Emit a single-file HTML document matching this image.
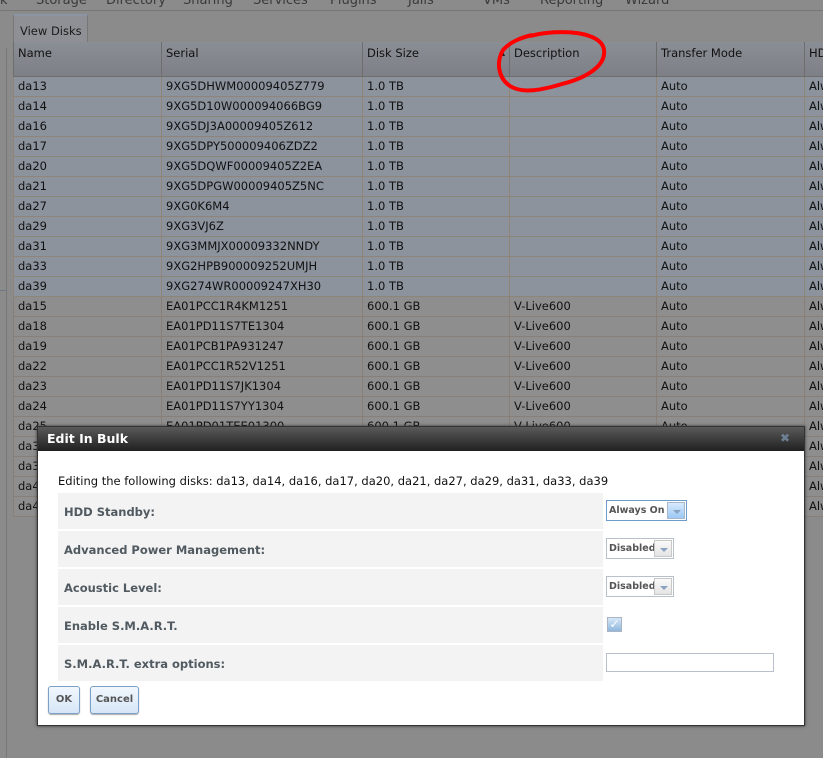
<!DOCTYPE html>
<html><head><style>
*{margin:0;padding:0;box-sizing:border-box}
body{width:823px;height:758px;overflow:hidden;background:#8b8b8b;font-family:"DejaVu Sans","Liberation Sans",sans-serif;font-size:11px;position:relative}
.abs{position:absolute}
.nav{top:-7px;left:0;font-size:13px;color:#3a3a3a;white-space:nowrap}
.tab{left:13px;top:14px;width:75px;height:28px;border:1px solid #777;border-bottom:none;background:#8e9096;color:#1a1a1a;font-size:11.5px;padding:8px 0 0 6px;border-top:2px solid #8b95a3}
table{position:absolute;left:13px;top:42px;border-collapse:collapse;table-layout:fixed;width:840px;font-size:11.5px;color:#111}
td,th{border:1px solid #7e7a76;border-top:none;text-align:left;font-weight:normal;padding:0 4px;height:20px;white-space:nowrap;overflow:hidden}
th{height:34px;vertical-align:top;padding-top:4px;background:linear-gradient(#8a8e95,#7d8086);border-color:#6e6e6e;color:#111}
tr.s td{background:#8c939d;border-color:#8f8478}
tr.u td{background:#8e8e8e;border-color:#8a7f76}
.dlg{left:37px;top:426px;width:768px;height:300px;background:#fff;border:1px solid #333;box-shadow:0 0 3px #333}
.title{height:24px;background:linear-gradient(#5a5a5a,#202020);color:#fff;font-weight:bold;font-size:12.5px;padding:4px 9px}
.row{position:absolute;left:20px;width:545px;height:36px;background:#f3f3f3;font-weight:bold;color:#505a60;font-size:11.5px;padding:12px 6px}
.sel{position:absolute;height:21px;border:1px solid #b8c0cc;background:#fff;font-weight:bold;font-size:9.5px;color:#555;padding:4px 2px;white-space:nowrap;overflow:hidden}
.sel i{position:absolute;right:1px;top:1px;width:18px;height:17px;border:1px solid #c8c8c8;background:linear-gradient(#fafafa,#e4e4e4)}
.sel i:after{content:"";position:absolute;left:5px;top:7px;border:4px solid transparent;border-top:4px solid #8aa2c0}
.btn{position:absolute;top:259px;height:28px;border:1px solid #7ba0c8;border-radius:3px;background:linear-gradient(#f2f7fd,#d6e6f7);font-weight:bold;color:#555;font-size:10px;text-align:center;line-height:26px;box-shadow:0 1px 1px #aaa}
</style></head><body>
<div class="abs nav"><span style="position:absolute;left:0">k</span><span style="position:absolute;left:36px">Storage</span><span style="position:absolute;left:106px">Directory</span><span style="position:absolute;left:183px">Sharing</span><span style="position:absolute;left:253px">Services</span><span style="position:absolute;left:330px">Plugins</span><span style="position:absolute;left:408px">Jails</span><span style="position:absolute;left:483px">VMs</span><span style="position:absolute;left:540px">Reporting</span><span style="position:absolute;left:625px">Wizard</span></div>
<div class="abs" style="left:0;top:10px;width:823px;height:1px;background:#777"></div>
<div class="abs" style="left:0;top:48px;width:7px;height:710px;border-right:1px solid #777"></div>
<div class="abs" style="left:0;top:290px;width:7px;height:1px;background:#6d7786"></div>
<div class="abs tab">View Disks</div>
<table>
<colgroup><col style="width:148px"><col style="width:201px"><col style="width:147px"><col style="width:147px"><col style="width:148px"><col style="width:49px"></colgroup>
<tr><th>Name</th><th>Serial</th><th>Disk Size<span style="float:right;font-size:7px;margin-top:3px">▲</span></th><th>Description</th><th>Transfer Mode</th><th>HDD Standby</th></tr>
<tr class="s"><td>da13</td><td>9XG5DHWM00009405Z779</td><td>1.0 TB</td><td></td><td>Auto</td><td>Always On</td></tr>
<tr class="s"><td>da14</td><td>9XG5D10W000094066BG9</td><td>1.0 TB</td><td></td><td>Auto</td><td>Always On</td></tr>
<tr class="s"><td>da16</td><td>9XG5DJ3A00009405Z612</td><td>1.0 TB</td><td></td><td>Auto</td><td>Always On</td></tr>
<tr class="s"><td>da17</td><td>9XG5DPY500009406ZDZ2</td><td>1.0 TB</td><td></td><td>Auto</td><td>Always On</td></tr>
<tr class="s"><td>da20</td><td>9XG5DQWF00009405Z2EA</td><td>1.0 TB</td><td></td><td>Auto</td><td>Always On</td></tr>
<tr class="s"><td>da21</td><td>9XG5DPGW00009405Z5NC</td><td>1.0 TB</td><td></td><td>Auto</td><td>Always On</td></tr>
<tr class="s"><td>da27</td><td>9XG0K6M4</td><td>1.0 TB</td><td></td><td>Auto</td><td>Always On</td></tr>
<tr class="s"><td>da29</td><td>9XG3VJ6Z</td><td>1.0 TB</td><td></td><td>Auto</td><td>Always On</td></tr>
<tr class="s"><td>da31</td><td>9XG3MMJX00009332NNDY</td><td>1.0 TB</td><td></td><td>Auto</td><td>Always On</td></tr>
<tr class="s"><td>da33</td><td>9XG2HPB900009252UMJH</td><td>1.0 TB</td><td></td><td>Auto</td><td>Always On</td></tr>
<tr class="s"><td>da39</td><td>9XG274WR00009247XH30</td><td>1.0 TB</td><td></td><td>Auto</td><td>Always On</td></tr>
<tr class="u"><td>da15</td><td>EA01PCC1R4KM1251</td><td>600.1 GB</td><td>V-Live600</td><td>Auto</td><td>Always On</td></tr>
<tr class="u"><td>da18</td><td>EA01PD11S7TE1304</td><td>600.1 GB</td><td>V-Live600</td><td>Auto</td><td>Always On</td></tr>
<tr class="u"><td>da19</td><td>EA01PCB1PA931247</td><td>600.1 GB</td><td>V-Live600</td><td>Auto</td><td>Always On</td></tr>
<tr class="u"><td>da22</td><td>EA01PCC1R52V1251</td><td>600.1 GB</td><td>V-Live600</td><td>Auto</td><td>Always On</td></tr>
<tr class="u"><td>da23</td><td>EA01PD11S7JK1304</td><td>600.1 GB</td><td>V-Live600</td><td>Auto</td><td>Always On</td></tr>
<tr class="u"><td>da24</td><td>EA01PD11S7YY1304</td><td>600.1 GB</td><td>V-Live600</td><td>Auto</td><td>Always On</td></tr>
<tr class="u"><td>da25</td><td>EA01PD01TEE01300</td><td>600.1 GB</td><td>V-Live600</td><td>Auto</td><td>Always On</td></tr>
<tr class="u"><td>da30</td><td></td><td></td><td></td><td></td><td>Always On</td></tr>
<tr class="u"><td>da34</td><td></td><td></td><td></td><td></td><td>Always On</td></tr>
<tr class="u"><td>da40</td><td></td><td></td><td></td><td></td><td>Always On</td></tr>
<tr class="u"><td>da41</td><td></td><td></td><td></td><td></td><td>Always On</td></tr>
</table>
<svg class="abs" style="left:0;top:0" width="823" height="758"><path d="M530 36 C562 28 602 32 604 50 C606 66 586 78 562 84 C542 90 522 94 510 86 C498 78 496 62 503 50 C510 42 520 38 532 35" fill="none" stroke="#f00" stroke-width="4"/></svg>
<div class="abs dlg">
<div class="title">Edit In Bulk<span style="position:absolute;right:14px;top:4px;color:#6d7f93;font-size:12px">✖</span></div>
<div style="position:absolute;left:20px;top:47px;font-size:11.5px;color:#111">Editing the following disks: da13, da14, da16, da17, da20, da21, da27, da29, da31, da33, da39</div>
<div class="row" style="top:66px">HDD Standby:</div>
<div class="row" style="top:104px">Advanced Power Management:</div>
<div class="row" style="top:142px">Acoustic Level:</div>
<div class="row" style="top:180px">Enable S.M.A.R.T.</div>
<div class="row" style="top:218px">S.M.A.R.T. extra options:</div>
<div class="sel" style="left:568px;top:73px;width:81px;border-color:#6d9ccc">Always On<i style="background:linear-gradient(#d8eaff,#9cc8f4);border-color:#a8b8c8"></i></div>
<div class="sel" style="left:568px;top:111px;width:68px">Disabled<i></i></div>
<div class="sel" style="left:568px;top:149px;width:68px">Disabled<i></i></div>
<div class="abs" style="left:569px;top:190px;width:15px;height:15px;border:1px solid #aab4c2;background:linear-gradient(#d6e8f8,#8fb6dc);color:#fff;font-size:12px;line-height:13px;text-align:center;font-weight:bold">✓</div>
<div class="abs" style="left:568px;top:226px;width:168px;height:19px;border:1px solid #b8c0cc"></div>
<div class="btn" style="left:10px;width:32px">OK</div>
<div class="btn" style="left:52px;width:49px">Cancel</div>
</div>
</body></html>
